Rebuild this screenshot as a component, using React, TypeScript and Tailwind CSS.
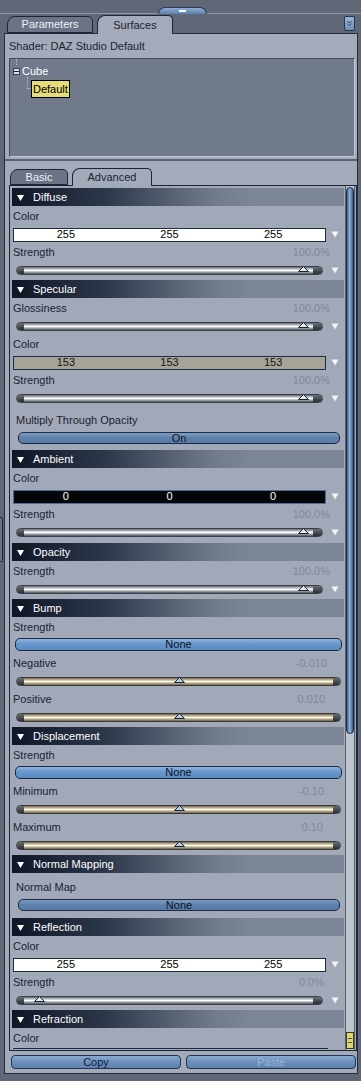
import clsx from 'clsx';
import { ChevronsDown } from 'lucide-react';

const Arrow = () => (
  <svg width="8" height="7" viewBox="0 0 8 7" className="shrink-0">
    <polygon points="0.5,0.5 7.5,0.5 4,6.5" fill="#f5f7fa" stroke="#c4cad3" strokeWidth="0.6" />
  </svg>
);

const Thumb = ({ fill, className }: { fill: string; className: string }) => (
  <svg width="11" height="6" viewBox="0 0 11 6" className={className}>
    <polygon points="0.5,5.5 5.5,0.6 10.5,5.5" fill={fill} stroke="#17233a" strokeWidth="1" />
  </svg>
);

function Header({ title }: { title: string }) {
  return (
    <div className="h-[18px] flex items-center bg-[linear-gradient(to_right,#0f1726_0%,#2c374a_28%,#6f7989_60%,#7d8696_72%,#7d8696_100%)]">
      <svg width="7" height="6" viewBox="0 0 7 6" className="ml-[5px] mt-[1px]">
        <polygon points="0,0 7,0 3.5,6" fill="#ffffff" />
      </svg>
      <span className="ml-[9px] text-white">{title}</span>
    </div>
  );
}

function Label({ text, value, pad = 'pr-[14px]', indent }: { text: string; value?: string; pad?: string; indent?: boolean }) {
  return (
    <div
      className={clsx(
        'flex items-center justify-between text-[#1b2230]',
        indent ? 'h-[24px] pt-[4px] pl-[4px]' : 'h-[20px] pl-[1px]',
        pad
      )}
    >
      <span>{text}</span>
      {value && <span className="text-[#7f8898]">{value}</span>}
    </div>
  );
}

function ColorField({ v, tone }: { v: string; tone: 'white' | 'gray' | 'black' }) {
  return (
    <div className="h-[16px] flex items-center">
      <div
        className={clsx(
          'ml-[1px] mt-[1px] w-[313px] h-[14px] border grid grid-cols-3 items-center text-center',
          tone === 'white' && 'bg-white text-black border-[#1c2d4a]',
          tone === 'gray' && 'bg-[#a8a397] text-[#141414] border-[#1c2d4a]',
          tone === 'black' && 'bg-[#050608] text-white border-[#4d6c98]'
        )}
      >
        <span>{v}</span>
        <span>{v}</span>
        <span>{v}</span>
      </div>
      <div className="ml-[5px] mt-[1px]">
        <Arrow />
      </div>
    </div>
  );
}

function Slider({ thumb }: { thumb: string }) {
  return (
    <div className="h-[16px] flex items-center">
      <div className="relative ml-[4px] w-[307px] h-[9px] rounded-full border border-[#3b4048] bg-[linear-gradient(to_bottom,#5e646d_0%,#c6cbd2_32%,#ffffff_50%,#a9afb7_70%,#4e545d_100%)]">
        <div className="absolute left-0 top-0 h-full w-[7px] rounded-l-full bg-[linear-gradient(to_bottom,#6a6f76,#2a2e34)]" />
        <div className="absolute right-0 top-0 h-full w-[9px] rounded-r-full bg-[linear-gradient(to_bottom,#6a6f76,#2a2e34)]" />
        <Thumb fill="#e6edf5" className={clsx('absolute top-[-1px]', thumb)} />
      </div>
      <div className="ml-[8px]">
        <Arrow />
      </div>
    </div>
  );
}

function TanSlider() {
  return (
    <div className="h-[16px] flex items-center">
      <div className="relative ml-[4px] w-[325px] h-[9px] rounded-full border border-[#3b3a37] bg-[linear-gradient(to_bottom,#6d6454_0%,#cbbd9d_30%,#fbf6ea_50%,#c8ba99_70%,#675e4f_100%)]">
        <div className="absolute left-0 top-0 h-full w-[7px] rounded-l-full bg-[linear-gradient(to_bottom,#6a6f76,#2a2e34)]" />
        <div className="absolute right-0 top-0 h-full w-[7px] rounded-r-full bg-[linear-gradient(to_bottom,#6a6f76,#2a2e34)]" />
        <Thumb fill="#b9cde4" className="absolute top-[-1px] left-[157px]" />
      </div>
    </div>
  );
}

function Btn({ text, wide }: { text: string; wide?: boolean }) {
  return (
    <div className="h-[16px] flex items-start">
      <div
        className={clsx(
          'flex items-center justify-center rounded-[5px] border border-[#1b2a42] text-[#0b1424]',
          wide
            ? 'ml-[3px] mt-[1px] w-[327px] h-[13px] bg-[linear-gradient(to_bottom,#8cb3de,#6796cb_45%,#5b8ac2)]'
            : 'ml-[6px] mt-[2px] w-[322px] h-[12px] bg-[linear-gradient(to_bottom,#7d9dc4,#5f82ad_45%,#587aa5)]'
        )}
      >
        {text}
      </div>
    </div>
  );
}

function Tab({ text, active, className }: { text: string; active?: boolean; className: string }) {
  return (
    <div
      className={clsx(
        'flex items-center justify-center border border-[#1f262f] rounded-tl-[8px] rounded-tr-[5px]',
        active ? 'bg-[#a3abba] text-[#1b2230] border-b-0 relative z-10 mb-[-1px]' : 'bg-[#6b7486] text-[#eef1f5]',
        className
      )}
    >
      {text}
    </div>
  );
}

export default function App() {
  return (
    <div className="w-[361px] h-[1081px] overflow-hidden bg-[#606878] text-[11px] leading-none font-['Liberation_Sans',Arial,sans-serif]">
      {/* top strip */}
      <div className="h-[14px] border-b border-[#9098a6]">
        <div className="ml-[158px] pt-[7px]">
          <div className="w-[49px] h-[7px] rounded-t-[8px] border border-b-0 border-[#2b3b56] bg-[linear-gradient(to_bottom,#8dadd3,#5e81ac)] flex justify-center pt-[2px]">
            <div className="w-[7px] h-[2px] bg-white" />
          </div>
        </div>
      </div>

      {/* tabs */}
      <div className="h-[19px] flex items-end pl-[7px]">
        <Tab text="Parameters" className="w-[86px] h-[17px]" />
        <Tab text="Surfaces" active className="ml-[4px] w-[76px] h-[19px]" />
        <div className="ml-auto mr-[6px] self-start mt-[2px] w-[11px] h-[15px] rounded-[2px] border border-[#25344c] bg-[linear-gradient(to_bottom,#9ab6d8,#6c8fbb)] flex items-center justify-center">
          <ChevronsDown size={9} strokeWidth={2.2} color="#1a2a44" />
        </div>
      </div>

      {/* body */}
      <div className="flex h-[1041px]">
        <div className="w-[4px] shrink-0">
          <div className="mt-[484px] w-[3px] h-[45px] border-y border-r border-[#1a2333] rounded-r-[2px] bg-[#6a7383]" />
        </div>

        <div className="w-[354px] shrink-0 border border-[#262d38] bg-[#a3abba]">
          <div className="h-[24px] flex items-center pl-[4px] text-[#1b2230]">Shader: DAZ Studio Default</div>

          {/* tree */}
          <div className="ml-[4px] w-[346px] h-[99px] border-t border-l border-[#454d5b] border-b border-r border-b-[#c3cad5] border-r-[#c3cad5] bg-[#717a8b] pl-[3px]">
            <div className="ml-[3px] h-[6px] border-l border-dotted border-[#b9c0cc]" />
            <div className="h-[12px] flex items-center">
              <div className="w-[7px] h-[7px] bg-[#d9dee6] border border-[#3a414d] flex items-center justify-center">
                <div className="w-[5px] h-[1px] bg-[#1b2230]" />
              </div>
              <span className="ml-[2px] text-white">Cube</span>
            </div>
            <div className="flex ml-[14px]">
              <div className="w-[4px] h-[12px] border-l border-b border-dotted border-[#b9c0cc]" />
              <div className="mt-[3px] h-[18px] px-[1px] flex items-center bg-[#e4dd79] border border-black text-black">Default</div>
            </div>
          </div>

          {/* separator */}
          <div className="mt-[2px] h-[2px] bg-[#5b6270] mb-[7px]" />

          {/* sub tabs */}
          <div className="h-[17px] flex items-end pl-[5px]">
            <Tab text="Basic" className="w-[58px] h-[16px]" />
            <Tab text="Advanced" active className="ml-[4px] w-[80px] h-[18px]" />
          </div>

          {/* content box */}
          <div className="ml-[4px] w-[348px] h-[866px] border border-[#1e2531] bg-[#a1a9b8] flex overflow-hidden">
            <div className="ml-[2px] w-[332px] pt-[2px] overflow-hidden">
              <div className="pb-[2px]">
                <Header title="Diffuse" />
                <Label text="Color" />
                <ColorField v="255" tone="white" />
                <Label text="Strength" value="100.0%" />
                <Slider thumb="left-[281px]" />
              </div>
              <div className="pb-[4px]">
                <Header title="Specular" />
                <Label text="Glossiness" value="100.0%" />
                <Slider thumb="left-[281px]" />
                <Label text="Color" />
                <ColorField v="153" tone="gray" />
                <Label text="Strength" value="100.0%" />
                <Slider thumb="left-[281px]" />
                <Label text="Multiply Through Opacity" indent />
                <Btn text="On" />
              </div>
              <div className="pb-[3px]">
                <Header title="Ambient" />
                <Label text="Color" />
                <ColorField v="0" tone="black" />
                <Label text="Strength" value="100.0%" />
                <Slider thumb="left-[281px]" />
              </div>
              <div className="pb-[2px]">
                <Header title="Opacity" />
                <Label text="Strength" value="100.0%" />
                <Slider thumb="left-[281px]" />
              </div>
              <div className="pb-[2px]">
                <Header title="Bump" />
                <Label text="Strength" />
                <Btn text="None" wide />
                <Label text="Negative" value="-0.010" pad="pr-[17px]" />
                <TanSlider />
                <Label text="Positive" value="0.010" pad="pr-[19px]" />
                <TanSlider />
              </div>
              <div className="pb-[2px]">
                <Header title="Displacement" />
                <Label text="Strength" />
                <Btn text="None" wide />
                <Label text="Minimum" value="-0.10" pad="pr-[20px]" />
                <TanSlider />
                <Label text="Maximum" value="0.10" pad="pr-[21px]" />
                <TanSlider />
              </div>
              <div className="pb-[5px]">
                <Header title="Normal Mapping" />
                <Label text="Normal Map" indent />
                <Btn text="None" />
              </div>
              <div className="pb-[2px]">
                <Header title="Reflection" />
                <Label text="Color" />
                <ColorField v="255" tone="white" />
                <Label text="Strength" value="0.0%" pad="pr-[20px]" />
                <Slider thumb="left-[17px]" />
              </div>
              <div>
                <Header title="Refraction" />
                <Label text="Color" />
                {/* top edge of the next colour field, scrolled out of view */}
                <div className="ml-[1px] w-[315px] h-[1px] bg-[#1c2d4a]" />
              </div>
            </div>

            {/* scrollbar */}
            <div className="ml-[1px] w-[10px] flex flex-col border-x border-[#59606d] bg-[#bfc5cf]">
              <div className="mt-[1px] h-[547px] rounded-full border border-[#1d2c44] bg-[linear-gradient(to_right,#3c5b86,#93b3da_45%,#5f80ab_75%,#36557e)]" />
              <div className="flex-1" />
              <div className="mb-[1px] h-[17px] border border-[#3d3a1c] bg-[#dcd47a] flex flex-col justify-center items-center gap-[3px]">
                <div className="w-[4px] h-[1px] bg-[#5a5420]" />
                <div className="w-[4px] h-[1px] bg-[#5a5420]" />
              </div>
            </div>
          </div>

          {/* buttons */}
          <div className="mt-[4px] flex h-[14px]">
            <div className="ml-[6px] w-[170px] h-[14px] rounded-[4px] border border-[#243550] bg-[linear-gradient(to_bottom,#88a9d0,#6c8fbb_50%,#5f83b0)] flex items-center justify-center text-[#13203a]">
              Copy
            </div>
            <div className="ml-[5px] w-[170px] h-[14px] rounded-[4px] border border-[#243550] bg-[linear-gradient(to_bottom,#88a9d0,#6c8fbb_50%,#5f83b0)] flex items-center justify-center text-[#9bb4d2]">
              Paste
            </div>
          </div>
        </div>

        <div className="w-[3px] shrink-0" />
      </div>
    </div>
  );
}
